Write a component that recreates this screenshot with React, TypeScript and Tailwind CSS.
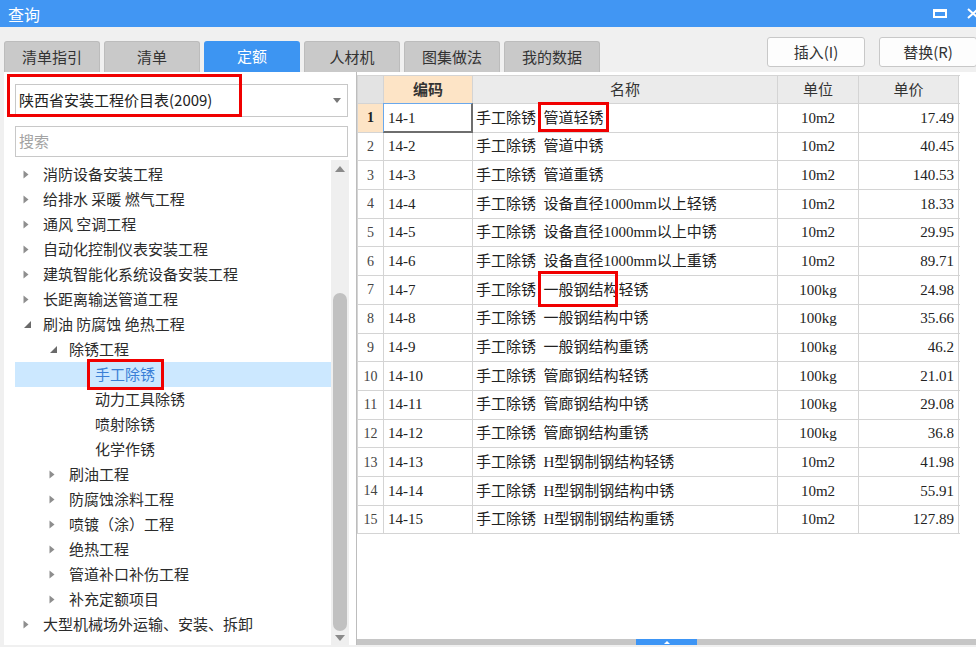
import React from "react";

type TreeNode = { label: string; level: 1 | 2 | 3; state: "c" | "e" | "n"; selected?: boolean };

const tree: TreeNode[] = [
  { label: "消防设备安装工程", level: 1, state: "c" },
  { label: "给排水 采暖 燃气工程", level: 1, state: "c" },
  { label: "通风 空调工程", level: 1, state: "c" },
  { label: "自动化控制仪表安装工程", level: 1, state: "c" },
  { label: "建筑智能化系统设备安装工程", level: 1, state: "c" },
  { label: "长距离输送管道工程", level: 1, state: "c" },
  { label: "刷油 防腐蚀 绝热工程", level: 1, state: "e" },
  { label: "除锈工程", level: 2, state: "e" },
  { label: "手工除锈", level: 3, state: "n", selected: true },
  { label: "动力工具除锈", level: 3, state: "n" },
  { label: "喷射除锈", level: 3, state: "n" },
  { label: "化学作锈", level: 3, state: "n" },
  { label: "刷油工程", level: 2, state: "c" },
  { label: "防腐蚀涂料工程", level: 2, state: "c" },
  { label: "喷镀（涂）工程", level: 2, state: "c" },
  { label: "绝热工程", level: 2, state: "c" },
  { label: "管道补口补伤工程", level: 2, state: "c" },
  { label: "补充定额项目", level: 2, state: "c" },
  { label: "大型机械场外运输、安装、拆卸", level: 1, state: "c" },
];

const levelPad: Record<number, string> = { 1: "pl-[8px]", 2: "pl-[34px]", 3: "pl-[60px]" };

type Row = { code: string; name: string; unit: string; price: string };

const rows: Row[] = [
  { code: "14-1", name: "管道轻锈", unit: "10m2", price: "17.49" },
  { code: "14-2", name: "管道中锈", unit: "10m2", price: "40.45" },
  { code: "14-3", name: "管道重锈", unit: "10m2", price: "140.53" },
  { code: "14-4", name: "设备直径1000mm以上轻锈", unit: "10m2", price: "18.33" },
  { code: "14-5", name: "设备直径1000mm以上中锈", unit: "10m2", price: "29.95" },
  { code: "14-6", name: "设备直径1000mm以上重锈", unit: "10m2", price: "89.71" },
  { code: "14-7", name: "一般钢结构轻锈", unit: "100kg", price: "24.98" },
  { code: "14-8", name: "一般钢结构中锈", unit: "100kg", price: "35.66" },
  { code: "14-9", name: "一般钢结构重锈", unit: "100kg", price: "46.2" },
  { code: "14-10", name: "管廊钢结构轻锈", unit: "100kg", price: "21.01" },
  { code: "14-11", name: "管廊钢结构中锈", unit: "100kg", price: "29.08" },
  { code: "14-12", name: "管廊钢结构重锈", unit: "100kg", price: "36.8" },
  { code: "14-13", name: "H型钢制钢结构轻锈", unit: "10m2", price: "41.98" },
  { code: "14-14", name: "H型钢制钢结构中锈", unit: "10m2", price: "55.91" },
  { code: "14-15", name: "H型钢制钢结构重锈", unit: "10m2", price: "127.89" },
];

const tabs = ["清单指引", "清单", "定额", "人材机", "图集做法", "我的数据"];

function TriRight() {
  return (
    <svg width="6" height="9" viewBox="0 0 6 9">
      <path d="M0.5 0.5 L5.5 4.5 L0.5 8.5 Z" fill="#8e8e8e" />
    </svg>
  );
}

function TriExpanded() {
  return (
    <svg width="7" height="7" viewBox="0 0 7 7">
      <path d="M7 0 L7 7 L0 7 Z" fill="#6a6a6a" />
    </svg>
  );
}

function TitleBar() {
  return (
    <div className="flex h-[27px] shrink-0 items-center bg-[#4196f3] pl-[8px] text-[16px] text-white">
      <span>查询</span>
      <div className="ml-auto flex items-center gap-[20px]">
        <svg width="14" height="9" viewBox="0 0 14 9">
          <rect x="1" y="1.5" width="12" height="6.5" fill="none" stroke="white" strokeWidth="2" />
          <rect x="0" y="0" width="14" height="3" fill="white" />
        </svg>
        <svg width="10" height="11" viewBox="0 0 10 11" className="-mr-[1px]">
          <path d="M1 1 L11 10 M11 1 L1 10" stroke="white" strokeWidth="2" />
        </svg>
      </div>
    </div>
  );
}

function Toolbar() {
  return (
    <div className="flex h-[45px] shrink-0">
      <div className="flex gap-[4px] pl-[4px] pt-[14px]">
        {tabs.map((t) =>
          t === "定额" ? (
            <div
              key={t}
              className="flex h-[31px] w-[96px] items-center justify-center rounded-t-[3px] bg-[#3d95f2] text-[15px] text-white"
            >
              {t}
            </div>
          ) : (
            <div
              key={t}
              className="flex h-[31px] w-[96px] items-center justify-center rounded-t-[3px] border border-b-0 border-[#bcbcbc] bg-[#c9c9c9] text-[15px] text-[#333]"
            >
              {t}
            </div>
          )
        )}
      </div>
      <div className="-mr-[1px] ml-auto flex gap-[14px] pt-[10px]">
        <div className="flex h-[30px] w-[98px] items-center justify-center rounded-[3px] border border-[#c8c8c8] bg-[#fdfdfd] text-[15px] text-[#333]">
          插入(I)
        </div>
        <div className="flex h-[30px] w-[98px] items-center justify-center rounded-[3px] border border-[#c8c8c8] bg-[#fdfdfd] text-[15px] text-[#333]">
          替换(R)
        </div>
      </div>
    </div>
  );
}

function LeftPanel() {
  return (
    <div className="relative ml-[4px] flex h-[573px] w-[352px] shrink-0 flex-col bg-white">
      <div className="ml-[11px] mt-[12px] flex h-[33px] w-[333px] items-center border border-[#c8c8c8] bg-white pl-[3px] pr-[6px] text-[15px] text-[#222]">
        <span>陕西省安装工程价目表(2009)</span>
        <svg width="8" height="5" viewBox="0 0 8 5" className="ml-auto">
          <path d="M0 0 L8 0 L4 5 Z" fill="#777" />
        </svg>
      </div>
      <div className="ml-[11px] mt-[9px] flex h-[31px] w-[333px] items-center border border-[#c8c8c8] bg-white pl-[3px] text-[15px] text-[#a3a3a3]">
        搜索
      </div>
      <div className="mt-[3px] flex min-h-0 flex-1 pl-[11px]">
        <div className="w-[316px] pt-[2px]">
          {tree.map((n) => (
            <div
              key={n.label}
              className={`relative flex h-[25px] items-center ${levelPad[n.level]} ${
                n.selected ? "bg-[#cce8ff] text-[#3a7fd6]" : "text-[#2b2b2b]"
              } text-[15px]`}
            >
              <span className="flex w-[20px] items-center">
                {n.state === "c" ? <TriRight /> : n.state === "e" ? <span className="pl-[1px]"><TriExpanded /></span> : null}
              </span>
              <span className="whitespace-nowrap">{n.label}</span>
              {n.selected && (
                <div className="pointer-events-none absolute left-[72px] top-[-3px] h-[31px] w-[77px] border-[3px] border-[#f00000]" />
              )}
            </div>
          ))}
        </div>
        <div className="flex w-[18px] flex-col bg-[#efefef]">
          <div className="flex h-[16px] items-center justify-center pt-[1px]">
            <svg width="10" height="6" viewBox="0 0 10 6">
              <path d="M5 0 L10 6 L0 6 Z" fill="#8a8a8a" />
            </svg>
          </div>
          <div className="h-[117px]" />
          <div className="mx-[2px] flex-1 rounded-full bg-[#c1c1c1]" />
          <div className="flex h-[14px] items-center justify-center">
            <svg width="10" height="6" viewBox="0 0 10 6">
              <path d="M0 0 L10 0 L5 6 Z" fill="#8a8a8a" />
            </svg>
          </div>
        </div>
      </div>
      <div className="pointer-events-none absolute left-[3px] top-[2px] h-[43px] w-[235px] border-[3px] border-[#f00000]" />
    </div>
  );
}

const tableFont = "font-['Liberation_Serif','Noto_Sans_CJK_SC',serif]";

function RightPanel() {
  return (
    <div className="flex h-[573px] flex-1 flex-col border-l border-[#bdbdbd] bg-white">
      <div className="pt-[3px]">
        <div className={`w-[603px] border-l border-t border-[#d4d4d4] ${tableFont} text-[15px] text-[#222]`}>
          <div className="flex h-[28px] border-b border-[#d4d4d4] font-['Noto_Sans_CJK_SC',sans-serif] text-[#333]">
            <div className="w-[26px] border-r border-[#d4d4d4] bg-[#e3e3e3]" />
            <div className="flex w-[89px] items-center justify-center border-r border-[#d4d4d4] bg-[#fde4c6] font-bold">
              编码
            </div>
            <div className="flex w-[305px] items-center justify-center border-r border-[#d4d4d4] bg-[#ebebeb]">
              名称
            </div>
            <div className="flex w-[81px] items-center justify-center border-r border-[#d4d4d4] bg-[#ebebeb]">
              单位
            </div>
            <div className="flex w-[100px] items-center justify-center border-r border-[#d4d4d4] bg-[#ebebeb]">
              单价
            </div>
          </div>
          {rows.map((r, i) => (
            <div key={r.code} className="flex h-[28.7px] border-b border-[#d4d4d4]">
              <div
                className={`flex w-[26px] items-center justify-center border-r border-[#d4d4d4] text-[14px] ${
                  i === 0 ? "bg-[#fde4c6] font-bold text-[#222]" : "text-[#444]"
                }`}
              >
                {i + 1}
              </div>
              <div className="relative flex w-[89px] items-center border-r border-[#d4d4d4] pl-[4px]">
                {i === 0 && (
                  <div className="pointer-events-none absolute inset-[-1px] border-b-2 border-l border-r-2 border-t border-b-[#6e6e6e] border-l-[#6aa8ec] border-r-[#6e6e6e] border-t-[#6aa8ec]" />
                )}
                <span>{r.code}</span>
              </div>
              <div className="relative flex w-[305px] items-center whitespace-nowrap border-r border-[#d4d4d4] pl-[3px]">
                <span>手工除锈{"\u2002"}{r.name}</span>
                {i === 0 && (
                  <div className="pointer-events-none absolute left-[65px] top-[-2px] z-10 h-[30px] w-[71px] border-[3px] border-[#f00000]" />
                )}
                {i === 6 && (
                  <div className="pointer-events-none absolute left-[65px] top-[-5px] z-10 h-[36px] w-[80px] border-[3px] border-[#f00000]" />
                )}
              </div>
              <div className="flex w-[81px] items-center justify-center border-r border-[#d4d4d4]">{r.unit}</div>
              <div className="flex w-[100px] items-center justify-end border-r border-[#d4d4d4] pr-[4px]">
                {r.price}
              </div>
            </div>
          ))}
        </div>
      </div>
      <div className="flex-1" />
      <div className="flex h-[6px] shrink-0 bg-[#c6c6c6] pl-[279px]">
        <div className="flex w-[61px] items-center justify-center bg-[#3d95f5]">
          <svg width="6" height="3" viewBox="0 0 6 3">
            <path d="M3 0 L6 3 L0 3 Z" fill="white" />
          </svg>
        </div>
      </div>
    </div>
  );
}

export default function App() {
  return (
    <div className="flex h-[647px] w-[976px] flex-col overflow-hidden bg-[#f0f0f0] font-['Noto_Sans_CJK_SC',sans-serif]">
      <TitleBar />
      <Toolbar />
      <div className="flex min-h-0 flex-1">
        <LeftPanel />
        <RightPanel />
      </div>
    </div>
  );
}
